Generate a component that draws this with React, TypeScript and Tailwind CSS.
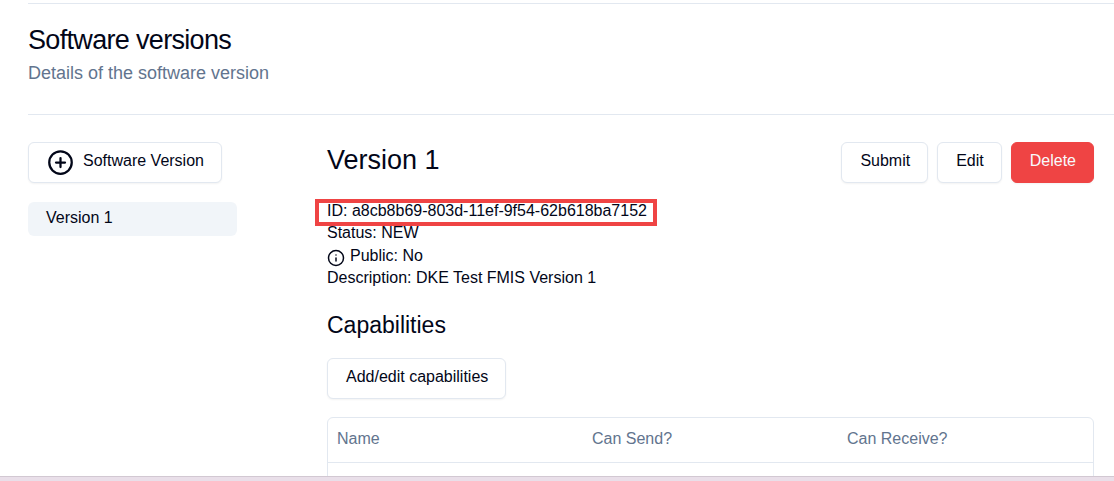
import type { ButtonHTMLAttributes, ReactNode } from "react";
import { clsx } from "clsx";
import { CirclePlus, Info } from "lucide-react";

type ButtonProps = ButtonHTMLAttributes<HTMLButtonElement> & {
  variant?: "outline" | "destructive";
  icon?: ReactNode;
};

function Button({ variant = "outline", icon, children, ...rest }: ButtonProps) {
  return (
    <button
      type="button"
      className={clsx(
        "inline-flex h-[41px] items-center rounded-md border pr-[17px] pl-[18px] whitespace-nowrap shadow-xs",
        variant === "outline" && "border-slate-200 bg-white text-slate-950",
        variant === "destructive" && "border-[#ef4444] bg-[#ef4444] text-slate-50",
      )}
      {...rest}
    >
      {icon}
      <span className="pb-1">{children}</span>
    </button>
  );
}

const columns = ["Name", "Can Send?", "Can Receive?"];

export default function App() {
  return (
    <div className="flex h-screen flex-col overflow-hidden bg-white font-['Liberation_Sans',Arial,sans-serif] text-[16px] leading-[22px] text-slate-950">
      <main className="min-h-0 grow overflow-hidden pt-[3px] pl-7">
        <header className="border-y border-slate-200 pt-5 pb-[29px]">
          <h1 className="text-[27px] leading-8 tracking-tight">Software versions</h1>
          <p className="pt-[5px] text-[18px] leading-6 text-slate-500">Details of the software version</p>
        </header>

        <div className="flex gap-[90px] pt-[27px] pr-5">
          <aside className="w-[209px] shrink-0">
            <Button icon={<CirclePlus className="mr-[9px] size-[27px]" aria-hidden="true" />}>
              Software Version
            </Button>
            <nav className="pt-[19px]">
              <a href="#version-1" className="block rounded-md bg-slate-100 px-[18px] pt-[5px] pb-[7px]">
                Version 1
              </a>
            </nav>
          </aside>

          <section id="version-1" className="min-w-0 grow">
            <div className="flex items-start justify-between">
              <h2 className="text-[27px] leading-9">Version 1</h2>
              <div className="flex gap-[9px]">
                <Button>Submit</Button>
                <Button>Edit</Button>
                <Button variant="destructive">Delete</Button>
              </div>
            </div>

            <div className="pt-[17px]">
              <p className="relative w-fit">
                ID: a8cb8b69-803d-11ef-9f54-62b618ba7152
                <span className="pointer-events-none absolute -top-px -right-2.5 -bottom-1 -left-3 border-4 border-[#ef4444]" />
              </p>
              <p>Status: NEW</p>
              <p className="flex h-[23px] items-start gap-[5px] leading-6">
                <Info className="mt-[5px] size-[18px]" aria-hidden="true" />
                Public: No
              </p>
              <p>Description: DKE Test FMIS Version 1</p>
            </div>

            <h3 className="pt-5 text-[23px] leading-8">Capabilities</h3>
            <div className="pt-[17px] pb-[18px]">
              <Button>Add/edit capabilities</Button>
            </div>

            <div className="rounded-md border border-slate-200">
              <table className="w-full table-fixed text-left">
                <thead>
                  <tr className="border-b border-slate-200">
                    {columns.map((name) => (
                      <th key={name} className="h-11 px-[9px] pb-px font-normal text-slate-500">
                        {name}
                      </th>
                    ))}
                  </tr>
                </thead>
                <tbody>
                  <tr>
                    <td colSpan={3} className="h-11" />
                  </tr>
                </tbody>
              </table>
            </div>
          </section>
        </div>
      </main>
      <footer className="h-[5px] shrink-0 border-t border-[#d2c8d2] bg-[#e9dfe9]" />
    </div>
  );
}
